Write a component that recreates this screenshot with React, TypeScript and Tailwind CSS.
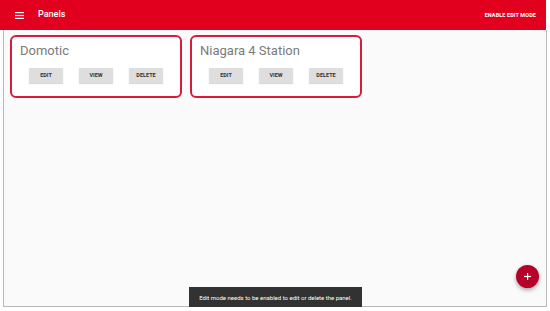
import React from "react";

function Card({ title }: { title: string }) {
  return (
    <div className="w-[172px] h-[63px] rounded-[6px] border-2 border-[#d81b3c] bg-white flex flex-col px-[8px]">
      <div className="mt-[4px] text-[13px] leading-[20px] text-[#7a7a7a]">{title}</div>
      <div className="mt-[7px] flex justify-center gap-[16px]">
        {["EDIT", "VIEW", "DELETE"].map((b) => (
          <div
            key={b}
            className="w-[34px] h-[15px] bg-[#dedede] flex items-center justify-center text-[5.5px] font-bold text-[#333] shadow-[0_1px_1px_rgba(0,0,0,0.15)]"
          >
            {b}
          </div>
        ))}
      </div>
    </div>
  );
}

export default function App() {
  return (
    <div className="w-[550px] h-[311px] bg-white relative overflow-hidden" style={{ fontFamily: "Roboto, 'Liberation Sans', sans-serif" }}>
      <div className="w-[546px] h-[30px] bg-[#e2001f] flex items-center px-[15px]">
        <svg width="9" height="7" viewBox="0 0 9 7">
          <rect x="0" y="0" width="9" height="1.2" fill="white" />
          <rect x="0" y="2.9" width="9" height="1.2" fill="white" />
          <rect x="0" y="5.8" width="9" height="1.2" fill="white" />
        </svg>
        <div className="ml-[14px] text-white text-[9px] font-medium">Panels</div>
        <div className="ml-auto mr-[-5px] text-white text-[5.5px] font-bold tracking-[0.1px]">ENABLE EDIT MODE</div>
      </div>
      <div className="ml-[3px] w-[544px] h-[277px] bg-[#fafafa] border-l border-r border-b border-[#b8b8b8] relative">
        <div className="flex gap-[8px] pl-[6px] pt-[5px]">
          <Card title="Domotic" />
          <Card title="Niagara 4 Station" />
        </div>
        <div className="absolute left-[185px] top-[257px] w-[173px] h-[20px] bg-[#323232] flex items-center justify-center text-white text-[6px]">
          Edit mode needs to be enabled to edit or delete the panel.
        </div>
        <div className="absolute left-[512px] top-[235px] w-[23px] h-[23px] rounded-full bg-[#b5002a] flex items-center justify-center shadow-[0_2px_4px_rgba(0,0,0,0.35)]">
          <svg width="7" height="7" viewBox="0 0 7 7">
            <rect x="3" y="0" width="1.2" height="7" fill="white" />
            <rect x="0" y="2.9" width="7" height="1.2" fill="white" />
          </svg>
        </div>
      </div>
    </div>
  );
}
